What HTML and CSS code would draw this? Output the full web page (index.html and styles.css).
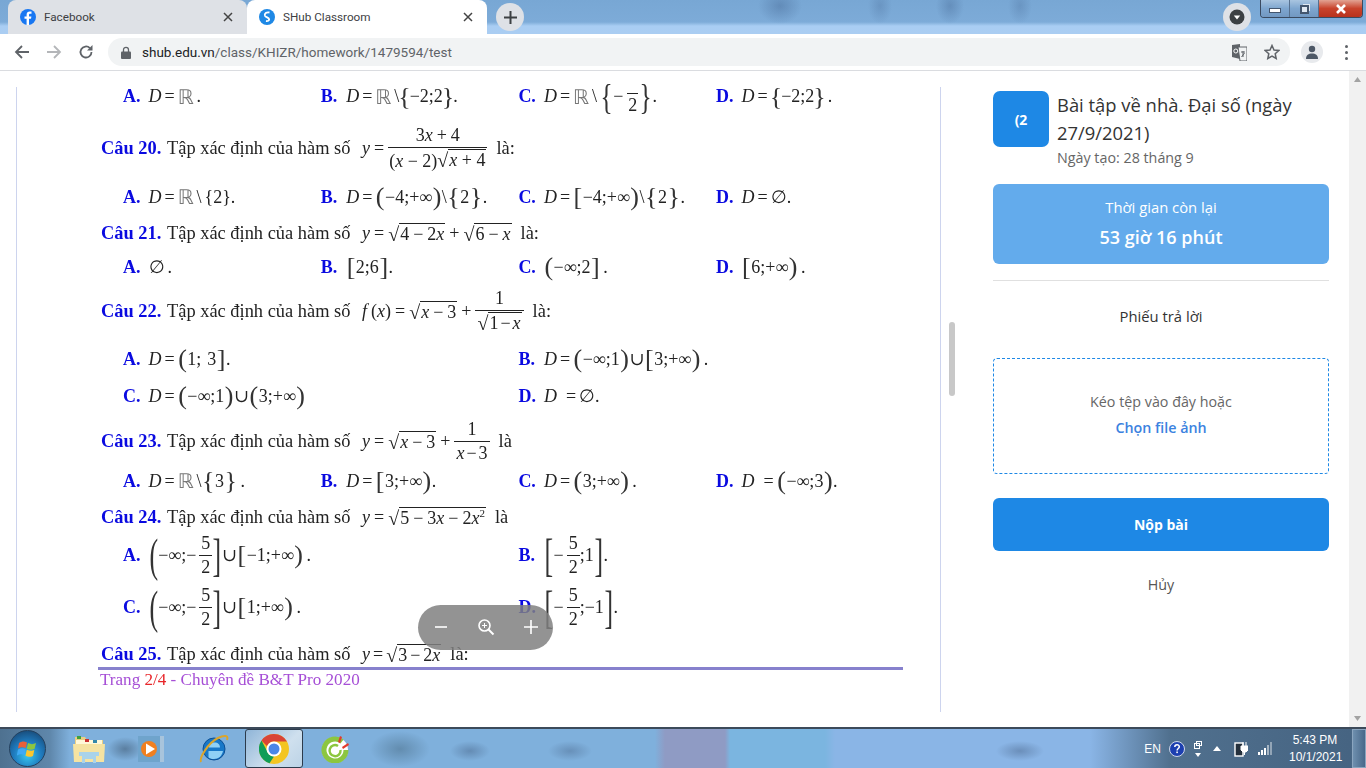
FILE: index.html
```html
<!DOCTYPE html>
<html lang="vi">
<head>
  <meta charset="UTF-8">
  <title>SHub Classroom</title>
  <link rel="stylesheet" href="styles.css">
</head>
<body>
  <!-- Browser frame -->
  <div class="tabstrip">
    <div class="tab tab-off">
      <svg class="favicon" viewBox="0 0 16 16"><circle cx="8" cy="8" r="8" fill="#1877f2"/><path d="M9 16V9.8h2l.4-2.4H9V6c0-.8.3-1.2 1.3-1.2h1.2V2.6C11.200 2.600 10.500 2.500 9.800 2.500 7.900 2.500 6.600 3.700 6.600 5.700v1.700H4.500v2.400h2.100V16z" fill="#fff"/></svg>
      <span class="tab-label">Facebook</span>
      <svg class="tab-x" viewBox="0 0 10 10"><path d="M1 1l8 8M9 1l-8 8" stroke="#444" stroke-width="1.500"/></svg>
    </div>
    <div class="tab tab-on">
      <svg class="favicon" viewBox="0 0 16 16"><circle cx="8" cy="8" r="8" fill="#1e88e5"/><path d="M10.500 3.500C7.500 2.800 5 4.500 6 6.800c.8 1.600 4 1.800 4.200 3.500.1 1.300-1.500 2-3.200 1.700" fill="none" stroke="#fff" stroke-width="1.800"/></svg>
      <span class="tab-label">SHub Classroom</span>
      <svg class="tab-x" viewBox="0 0 10 10"><path d="M1 1l8 8M9 1l-8 8" stroke="#444" stroke-width="1.500"/></svg>
    </div>
    <div class="round-btn new-tab">
      <svg width="13" height="13" viewBox="0 0 13 13"><path d="M6.500 0v13M0 6.500h13" stroke="#3c4043" stroke-width="2"/></svg>
    </div>
    <div class="round-btn ext-btn">
      <svg width="16" height="16" viewBox="0 0 16 16"><circle cx="8" cy="8" r="7.500" fill="#3c4043"/><path d="M4.800 6.500h6.400L8 10.500z" fill="#fff"/></svg>
    </div>
    <div class="win-controls">
      <div class="win-btn win-min"><span class="min-bar"></span></div>
      <div class="win-btn win-max"><span class="max-box"></span></div>
      <div class="win-btn win-close">
        <svg width="12" height="10" viewBox="0 0 12 10"><path d="M2 1l8 8M10 1l-8 8" stroke="#fff" stroke-width="2.600"/></svg>
      </div>
    </div>
  </div>

  <div class="toolbar">
    <div class="nav-btn">
      <svg width="16" height="16" viewBox="0 0 16 16"><path d="M15 8H2M8 2L2 8l6 6" fill="none" stroke="#5f6368" stroke-width="1.800"/></svg>
    </div>
    <div class="nav-btn">
      <svg width="16" height="16" viewBox="0 0 16 16"><path d="M1 8h13M8 2l6 6-6 6" fill="none" stroke="#b4b6b9" stroke-width="1.800"/></svg>
    </div>
    <div class="nav-btn">
      <svg width="16" height="16" viewBox="0 0 16 16"><path d="M13.500 8a5.500 5.500 0 1 1-1.600-3.900" fill="none" stroke="#5f6368" stroke-width="1.800"/><path d="M14.500 1v5.500H9z" fill="#5f6368"/></svg>
    </div>
    <div class="omnibox">
      <svg class="lock" width="10" height="13" viewBox="0 0 10 13"><path d="M2.500 6V3.800a2.500 2.500 0 0 1 5 0V6" fill="none" stroke="#5f6368" stroke-width="1.300"/><rect y="5.500" width="10" height="7.500" rx="1" fill="#5f6368"/></svg>
      <span class="url"><span class="url-host">shub.edu.vn</span>/class/KHIZR/homework/1479594/test</span>
      <svg class="translate" width="15" height="17" viewBox="0 0 15 17"><path d="M0 1l8-1 0 15-8-2z" fill="#5f6368"/><path d="M6 3h9v14H8z" fill="#f1f3f4" stroke="#5f6368"/><circle cx="3.800" cy="7" r="2" fill="none" stroke="#fff"/><path d="M9 8h4M11 7v6M9.500 13l3-4" stroke="#5f6368"/></svg>
      <svg class="star" width="16" height="16" viewBox="0 0 16 16"><path d="M8 1.500l2 4.500 4.800.5-3.600 3.200 1 4.800L8 12.100l-4.200 2.400 1-4.800L1.200 6.500 6 6z" fill="none" stroke="#5f6368" stroke-width="1.500"/></svg>
    </div>
    <div class="avatar">
      <svg width="12" height="14" viewBox="0 0 12 14"><circle cx="6" cy="4" r="3.200" fill="#4d5866"/><path d="M0 14c0-4 2.500-5.500 6-5.500s6 1.500 6 5.500z" fill="#4d5866"/></svg>
    </div>
    <div class="menu-dots"><span></span><span></span><span></span></div>
  </div>

  <!-- Page -->
  <div class="page">
    <div class="sheet-wrap">
      <div class="sheet">
        <div class="row h37 first">
          <div class="opt"><b class="key">A.</b><span class="math"><i>D</i> = <span class="bb">ℝ</span> .</span></div>
          <div class="opt"><b class="key">B.</b><span class="math"><i>D</i> = <span class="bb">ℝ</span> \<span class="d d-tight">{</span>−2;2<span class="d d-tight">}</span>.</span></div>
          <div class="opt"><b class="key">C.</b><span class="math"><i>D</i> = <span class="bb">ℝ</span> \ <span class="d d-mid">{</span>− <span class="frac"><span class="num num-cut"></span><span class="den">2</span></span><span class="d d-mid">}</span>.</span></div>
          <div class="opt"><b class="key">D.</b><span class="math"><i>D</i> = <span class="d d-tight">{</span>−2;2<span class="d d-tight">}</span> .</span></div>
        </div>

        <div class="q h66"><b class="qno">Câu 20.</b> Tập xác định của hàm số <span class="math qm"><i>y</i> = <span class="frac"><span class="num">3<i>x</i> + 4</span><span class="den den-wide">(<i>x</i> − 2)<span class="sqrt"><span class="rad-sign">√</span><span class="rad"><i>x</i> + 4</span></span></span></span></span> <span class="la">là:</span></div>

        <div class="row h32">
          <div class="opt"><b class="key">A.</b><span class="math"><i>D</i> = <span class="bb">ℝ</span> \ {2}.</span></div>
          <div class="opt"><b class="key">B.</b><span class="math"><i>D</i> = <span class="d">(</span>−4;+∞<span class="d">)</span>\<span class="d">{</span>2<span class="d">}</span>.</span></div>
          <div class="opt"><b class="key">C.</b><span class="math"><i>D</i> = <span class="d">[</span>−4;+∞<span class="d">)</span>\<span class="d">{</span>2<span class="d">}</span>.</span></div>
          <div class="opt"><b class="key">D.</b><span class="math"><i>D</i> = ∅.</span></div>
        </div>

        <div class="q h40"><b class="qno">Câu 21.</b> Tập xác định của hàm số <span class="math qm"><i>y</i> = <span class="sqrt"><span class="rad-sign">√</span><span class="rad">4 − 2<i>x</i></span></span> + <span class="sqrt"><span class="rad-sign">√</span><span class="rad">6 − <i>x</i></span></span></span> <span class="la">là:</span></div>

        <div class="row h28">
          <div class="opt"><b class="key">A.</b><span class="math">∅ .</span></div>
          <div class="opt"><b class="key">B.</b><span class="math"><span class="d">[</span>2;6<span class="d">]</span>.</span></div>
          <div class="opt"><b class="key">C.</b><span class="math"><span class="d">(</span>−∞;2<span class="d">]</span> .</span></div>
          <div class="opt"><b class="key">D.</b><span class="math"><span class="d">[</span>6;+∞<span class="d">)</span> .</span></div>
        </div>

        <div class="q h60"><b class="qno">Câu 22.</b> Tập xác định của hàm số <span class="math qm"><i>f</i> (<i>x</i>) = <span class="sqrt"><span class="rad-sign">√</span><span class="rad"><i>x</i> − 3</span></span> + <span class="frac"><span class="num">1</span><span class="den den-tight"><span class="sqrt"><span class="rad-sign">√</span><span class="rad">1 − <i>x</i></span></span></span></span></span> <span class="la">là:</span></div>

        <div class="row row-2 h36">
          <div class="opt"><b class="key">A.</b><span class="math"><i>D</i> = <span class="d">(</span>1;&nbsp; 3<span class="d">]</span>.</span></div>
          <div class="opt"><b class="key">B.</b><span class="math"><i>D</i> = <span class="d">(</span>−∞;1<span class="d">)</span>∪<span class="d">[</span>3;+∞<span class="d">)</span> .</span></div>
        </div>
        <div class="row row-2 h38">
          <div class="opt"><b class="key">C.</b><span class="math"><i>D</i> = <span class="d">(</span>−∞;1<span class="d">)</span>∪<span class="d">(</span>3;+∞<span class="d">)</span></span></div>
          <div class="opt"><b class="key">D.</b><span class="math"><i>D</i>&nbsp;&nbsp; = ∅.</span></div>
        </div>

        <div class="q h52"><b class="qno">Câu 23.</b> Tập xác định của hàm số <span class="math qm"><i>y</i> = <span class="sqrt"><span class="rad-sign">√</span><span class="rad"><i>x</i> − 3</span></span> + <span class="frac"><span class="num">1</span><span class="den den-tight"><i>x</i> − 3</span></span></span> <span class="la">là</span></div>

        <div class="row h28">
          <div class="opt"><b class="key">A.</b><span class="math"><i>D</i> = <span class="bb">ℝ</span> \<span class="d">{</span>3<span class="d">}</span> .</span></div>
          <div class="opt"><b class="key">B.</b><span class="math"><i>D</i> = <span class="d">[</span>3;+∞<span class="d">)</span>.</span></div>
          <div class="opt"><b class="key">C.</b><span class="math"><i>D</i> = <span class="d">(</span>3;+∞<span class="d">)</span> .</span></div>
          <div class="opt"><b class="key">D.</b><span class="math"><i>D</i>&nbsp;&nbsp; = <span class="d">(</span>−∞;3<span class="d">)</span>.</span></div>
        </div>

        <div class="q h44"><b class="qno">Câu 24.</b> Tập xác định của hàm số <span class="math qm"><i>y</i> = <span class="sqrt"><span class="rad-sign">√</span><span class="rad">5 − 3<i>x</i> − 2<i>x</i><sup>2</sup></span></span></span> <span class="la">là</span></div>

        <div class="row row-2 h32">
          <div class="opt"><b class="key">A.</b><span class="math"><span class="d d-tall">(</span>−∞;− <span class="frac"><span class="num">5</span><span class="den">2</span></span><span class="d d-tall">]</span>∪<span class="d">[</span>−1;+∞<span class="d">)</span> .</span></div>
          <div class="opt"><b class="key">B.</b><span class="math"><span class="d d-tall">[</span>− <span class="frac"><span class="num">5</span><span class="den">2</span></span>;1<span class="d d-tall">]</span>.</span></div>
        </div>
        <div class="row row-2 h72">
          <div class="opt"><b class="key">C.</b><span class="math"><span class="d d-tall">(</span>−∞;− <span class="frac"><span class="num">5</span><span class="den">2</span></span><span class="d d-tall">]</span>∪<span class="d">[</span>1;+∞<span class="d">)</span> .</span></div>
          <div class="opt"><b class="key">D.</b><span class="math"><span class="d d-tall">[</span>− <span class="frac"><span class="num">5</span><span class="den">2</span></span>;−1<span class="d d-tall">]</span>.</span></div>
        </div>

        <div class="q h22"><b class="qno">Câu 25.</b> Tập xác định của hàm số <span class="math qm qm-tight"><i>y</i> = <span class="sqrt"><span class="rad-sign">√</span><span class="rad">3 − 2<i>x</i></span></span></span> <span class="la">là:</span></div>

        <div class="sheet-rule"></div>
        <div class="sheet-foot">Trang <span class="foot-no">2/4</span> - Chuyên đề B&amp;T Pro 2020</div>
      </div>

      <!-- Zoom controls over the sheet -->
      <div class="zoom-pill">
        <svg width="14" height="14" viewBox="0 0 14 14"><path d="M1 7h12" stroke="#fff" stroke-width="1.600"/></svg>
        <svg width="18" height="18" viewBox="0 0 18 18"><circle cx="7.500" cy="7.500" r="5.500" fill="none" stroke="#fff" stroke-width="1.600"/><path d="M11.500 11.500l5 5" stroke="#fff" stroke-width="2"/><path d="M5 7.500h5M7.500 5v5" stroke="#fff"/></svg>
        <svg width="14" height="14" viewBox="0 0 14 14"><path d="M0 7h14M7 0v14" stroke="#fff" stroke-width="1.600"/></svg>
      </div>
    </div>

    <div class="sheet-scroll"><div class="sheet-thumb"></div></div>

    <aside class="panel">
      <div class="hw-head">
        <div class="hw-badge">(2</div>
        <div class="hw-info">
          <div class="hw-title">Bài tập về nhà. Đại số (ngày 27/9/2021)</div>
          <div class="hw-date">Ngày tạo: 28 tháng 9</div>
        </div>
      </div>
      <div class="timer">
        <div class="timer-label">Thời gian còn lại</div>
        <div class="timer-value">53 giờ 16 phút</div>
      </div>
      <div class="divider"></div>
      <div class="answer-title">Phiếu trả lời</div>
      <div class="dropzone">
        <div class="drop-text">Kéo tệp vào đây hoặc</div>
        <div class="drop-link">Chọn file ảnh</div>
      </div>
      <div class="submit">Nộp bài</div>
      <div class="cancel">Hủy</div>
    </aside>

    <div class="page-scroll">
      <svg width="7" height="5" viewBox="0 0 7 5"><path d="M3.500 0L7 5H0z" fill="#a3a3a3"/></svg>
      <svg width="7" height="5" viewBox="0 0 7 5"><path d="M3.500 5L7 0H0z" fill="#a3a3a3"/></svg>
    </div>
  </div>

  <!-- Windows taskbar -->
  <div class="taskbar">
    <div class="orb">
      <svg width="22" height="22" viewBox="0 0 22 22"><path d="M2 5c3-2 5-2 8-.5L8.800 10C6 8.800 4 8.800 1 10.500z" fill="#e8603a"/><path d="M11 5c3 1.500 5 1.500 8 0l-1.500 6c-3 1.200-5 1-7.700-.2z" fill="#8cc63f"/><path d="M1 11.500c3-1.500 5-1.500 7.700-.3L7.500 17c-3-1.300-5-1-7.700.5z" fill="#3fa9f5"/><path d="M9.800 11.800c3 1.200 5 1.400 7.500.2L16 18c-3 1.300-5 1-7.500-.3z" fill="#fdc62d"/></svg>
    </div>
    <div class="tb-item tb-folder">
      <svg width="32" height="32" viewBox="0 0 32 32"><path d="M2 4h10l2 3h16v20H2z" fill="#e8cf84"/><rect x="3" y="7" width="26" height="5" fill="#fff8d8"/><path d="M0 11h32l-1 18H1z" fill="#f5e3a2"/><rect x="4" y="3" width="4" height="3" fill="#3fa03f"/><rect x="12" y="6" width="4" height="3" fill="#c33"/><rect x="20" y="7" width="4" height="3" fill="#38a"/><path d="M6 19h20v4h-3v7h-3v-4h-8v4H9v-7H6z" fill="#a9d3ea"/></svg>
    </div>
    <div class="tb-item tb-wmp">
      <svg width="26" height="28" viewBox="0 0 26 28"><rect x="3" y="1" width="23" height="26" fill="#a8c4dc"/><rect x="0" y="1" width="22" height="26" fill="#6fa4cc"/><circle cx="11" cy="14" r="8" fill="#f08020"/><path d="M8 8.500L17 14l-9 5.500z" fill="#fff"/></svg>
    </div>
    <div class="tb-item tb-ie">
      <svg width="32" height="32" viewBox="0 0 32 32"><circle cx="16" cy="16" r="11" fill="#1878c8"/><path d="M11 14.500h11c0-3-2-5-5.500-5S11 11.500 11 14.500zM10.500 18h14.500c-1 5-4.500 8-9 8-2 0-4-.5-5.500-1.500" fill="#8fd0f5"/><circle cx="16" cy="16" r="11" fill="none" stroke="#0d4f94"/><path d="M3 29C1 25 10 10 20 5c6-3 11-3 9 2" fill="none" stroke="#dba52c" stroke-width="2"/></svg>
    </div>
    <div class="tb-item tb-chrome">
      <svg width="30" height="30" viewBox="0 0 30 30"><circle cx="15" cy="15" r="15" fill="#f3c522"/><path d="M15 0a15 15 0 0 1 13 7.500H15a7.500 7.500 0 0 0-7 4.800L2.500 6.500A15 15 0 0 1 15 0z" fill="#d94437"/><path d="M2.500 6.500L8.800 18.500A7.500 7.500 0 0 0 15 22.500L10.500 29.300A15 15 0 0 1 2.500 6.500z" fill="#0f9d58"/><circle cx="15" cy="15" r="7.500" fill="#fff"/><circle cx="15" cy="15" r="5.500" fill="#4a86e8"/></svg>
    </div>
    <div class="tb-item tb-coccoc">
      <svg width="28" height="28" viewBox="0 0 28 28"><circle cx="14" cy="15" r="13" fill="#fff"/><path d="M21 6.500A11 11 0 1 0 25 15" fill="none" stroke="#8cc63f" stroke-width="5"/><path d="M17 11a5.500 5.500 0 1 0 2.500 4" fill="none" stroke="#8cc63f" stroke-width="2.500"/><path d="M17 7l2-6 2 1-2 6zM21 12l6-4 1 2-6 4z" fill="#e23b2e"/></svg>
    </div>
    <div class="tray">
      <span class="tray-lang">EN</span>
      <svg class="tray-help" width="16" height="16" viewBox="0 0 16 16"><circle cx="8" cy="8" r="7.500" fill="#1c3fb0" stroke="#cfd8ea"/><path d="M5.800 6c0-3 4.500-3 4.500-.2 0 1.700-2.200 1.700-2.200 3.700" fill="none" stroke="#fff" stroke-width="1.500"/><rect x="7.300" y="10.500" width="1.600" height="1.600" fill="#fff"/></svg>
      <div class="tray-lang-bar">
        <svg width="8" height="8" viewBox="0 0 8 8"><rect x=".5" y="2.500" width="5" height="5" fill="none" stroke="#fff"/><rect x="2.500" y=".5" width="5" height="4" fill="none" stroke="#fff"/></svg>
        <svg width="6" height="4" viewBox="0 0 6 4"><path d="M0 0h6L3 4z" fill="#fff"/></svg>
      </div>
      <svg class="tray-up" width="8" height="5" viewBox="0 0 8 5"><path d="M4 0l4 5H0z" fill="#fff"/></svg>
      <svg class="tray-power" width="14" height="16" viewBox="0 0 14 16"><rect x="1" y="2" width="8" height="13" fill="#24303c" stroke="#fff" stroke-width="1.400"/><path d="M7 5h7v4l-2 2H9L7 9zM9 1v4M12 1v4M10.500 11v3" fill="#fff" stroke="#fff"/></svg>
      <svg class="tray-signal" width="15" height="13" viewBox="0 0 15 13"><rect y="10" width="2" height="3" fill="#fff"/><rect x="3" y="8" width="2" height="5" fill="#fff"/><rect x="6" y="6" width="2" height="7" fill="#fff"/><rect x="9" y="3" width="2" height="10" fill="#fff" opacity=".5"/><rect x="12" y="0" width="2" height="13" fill="#fff" opacity=".4"/></svg>
      <div class="clock"><div>5:43 PM</div><div>10/1/2021</div></div>
      <div class="show-desktop"></div>
    </div>
  </div>
</body>
</html>
```
FILE: styles.css
```css
html, body {
  margin: 0;
  height: 768px;
  overflow: hidden;
  background: #fff;
}
body {
  display: flex;
  flex-direction: column;
  font-family: 'Open Sans', sans-serif;
  color: #333;
}

/* Tab strip with the blurred desktop behind it */
.tabstrip {
  height: 34px;
  flex: none;
  display: flex;
  align-items: flex-start;
  padding-left: 8px;
  box-sizing: border-box;
  font-family: Roboto, sans-serif;
  background:
    radial-gradient(ellipse 22px 18px at 780px 6px, rgba(70,105,150,.45), transparent),
    radial-gradient(ellipse 12px 18px at 880px 6px, rgba(70,105,150,.3), transparent),
    radial-gradient(ellipse 14px 18px at 950px 6px, rgba(70,105,150,.4), transparent),
    radial-gradient(ellipse 12px 18px at 1020px 6px, rgba(70,105,150,.3), transparent),
    linear-gradient(to bottom, #78a7d4 0, #7dabd8 22px, #a9cdf3 26px, #aacdf2 100%);
}
.tab {
  width: 239px;
  height: 34px;
  box-sizing: border-box;
  display: flex;
  align-items: center;
  padding: 0 14px 0 12px;
  border-radius: 8px 8px 0 0;
  font-size: 11.7px;
  color: #3c4043;
}
.tab-off { background: #dee1e6; }
.tab-on { background: #fff; width: 240px; }
.favicon { width: 16px; height: 16px; flex: none; }
.tab-label { margin-left: 8px; flex: 1; }
.tab-x { width: 10px; height: 10px; flex: none; }
.round-btn {
  width: 28px;
  height: 28px;
  margin-top: 3px;
  border-radius: 50%;
  background: #dee1e6;
  display: flex;
  align-items: center;
  justify-content: center;
  flex: none;
}
.new-tab { margin-left: 9px; }
.ext-btn { margin-left: auto; }
.win-controls {
  display: flex;
  width: 103px;
  height: 18px;
  margin: 0 3px 0 9px;
  box-sizing: border-box;
  border: 1px solid #3a4a60;
  border-top: 0;
  border-radius: 0 0 4px 4px;
  overflow: hidden;
}
.win-btn {
  display: flex;
  align-items: center;
  justify-content: center;
  border-right: 1px solid #56708e;
  background: linear-gradient(to bottom, #a9c5e0, #7ea6cf 50%, #7298c2);
}
.win-min, .win-max { width: 28px; }
.win-close {
  flex: 1;
  border-right: 0;
  background: linear-gradient(to bottom, #e2a393, #c8432c 50%, #b8321d);
}
.min-bar {
  width: 12px;
  height: 5px;
  margin-top: 4px;
  background: #fff;
  border: 1px solid #44566e;
  box-sizing: border-box;
}
.max-box {
  width: 9px;
  height: 9px;
  margin-top: 2px;
  background: #dfe8f2;
  border: 2px solid #44566e;
  box-shadow: 2px -2px 0 -1px #dfe8f2;
  box-sizing: border-box;
}

/* Toolbar */
.toolbar {
  height: 37px;
  flex: none;
  box-sizing: border-box;
  display: flex;
  align-items: center;
  padding-left: 6px;
  background: #fff;
  border-bottom: 1px solid #dadce0;
  font-family: Roboto, sans-serif;
}
.nav-btn {
  width: 32px;
  display: flex;
  justify-content: center;
  flex: none;
}
.omnibox {
  width: 1182px;
  height: 28px;
  margin-left: 6px;
  flex: none;
  display: flex;
  align-items: center;
  padding-left: 13px;
  box-sizing: border-box;
  border-radius: 14px;
  background: #f1f3f4;
}
.url {
  margin-left: 11px;
  font-size: 13.5px;
  color: #5f6368;
  flex: 1;
}
.url-host { color: #202124; }
.translate { margin-right: 17px; }
.star { margin-right: 10px; }
.avatar {
  width: 22px;
  height: 22px;
  margin-left: 11px;
  border-radius: 50%;
  background: #e8eaed;
  display: flex;
  align-items: center;
  justify-content: center;
  flex: none;
}
.menu-dots {
  margin-left: 22px;
  display: flex;
  flex-direction: column;
  gap: 3px;
}
.menu-dots span {
  width: 3px;
  height: 3px;
  border-radius: 50%;
  background: #5f6368;
}

/* Page area */
.page {
  flex: 1;
  min-height: 0;
  display: flex;
  padding-left: 16px;
  background: #fff;
  position: relative;
}
.sheet-wrap { position: relative; flex: none; }
.sheet {
  display: flow-root;
  width: 925px;
  height: 625px;
  margin-top: 16px;
  box-sizing: border-box;
  border-left: 1px solid #cdd4ee;
  border-right: 1px solid #cdd4ee;
  font-family: 'Liberation Serif', 'DejaVu Serif', serif;
  font-size: 18px;
  color: #222;
  filter: blur(.35px);
}
.first { margin-top: -9px; }
.h22 { height: 22px; }
.h28 { height: 28px; }
.h32 { height: 32px; }
.h36 { height: 36px; }
.h37 { height: 37px; }
.h38 { height: 38px; }
.h40 { height: 40px; }
.h44 { height: 44px; }
.h52 { height: 52px; }
.h60 { height: 60px; }
.h66 { height: 66px; }
.h72 { height: 72px; }

.row {
  display: grid;
  grid-template-columns: repeat(4, 197.7px);
  grid-template-rows: 100%;
  align-items: center;
  padding-left: 106px;
}
.row-2 { grid-template-columns: repeat(2, 395.4px); }
.opt { display: flex; align-items: center; }
.key {
  width: 25.5px;
  flex: none;
  color: #0a0ae0;
}
.q {
  display: flex;
  align-items: center;
  padding-left: 84px;
  white-space: pre;
  font-size: 18.4px;
}
.qno { color: #0a0ae0; margin-right: 1.5px; }
.la { margin-left: 9px; }
.math {
  display: inline-flex;
  align-items: center;
  white-space: pre;
  word-spacing: -1.5px;
}
.qm { margin-left: 7px; font-size: 18px; word-spacing: -.5px; }
.qm-tight { word-spacing: -1.5px; }
.bb { font-family: 'DejaVu Sans', sans-serif; color: #777; font-size: 20px; line-height: 1; }
.d {
  font-size: 26px;
  line-height: 1;
  font-weight: 400;
  color: #333;
  margin: 0 .5px;
}
.d-tight { margin: 0 -1px; }
.d-mid { font-size: 36px; transform: scaleX(.7); margin: 0 -2px; }
.d-tall { font-size: 47px; transform: scaleX(.55); margin: 0 -3px; }
.frac {
  display: inline-flex;
  flex-direction: column;
  align-items: stretch;
  text-align: center;
  line-height: 20px;
}
.num { border-bottom: 1px solid #222; padding: 0 2px 2px; }
.num-cut { height: 14px; padding: 0; width: 11px; align-self: center; }
.den { padding: 1px 2px 0; }
.den-wide { word-spacing: 0; padding: 1px 1px 0; }
.den-tight { word-spacing: -2.5px; }
.sqrt { display: inline-flex; align-items: flex-end; line-height: 20px; }
.rad-sign { font-size: 20px; line-height: 20px; }
.rad { border-top: 1px solid #222; padding: 0 1px; }
sup { font-size: 11px; line-height: 0; }
.sheet-rule {
  height: 3px;
  margin: 2px 37px 0 81px;
  background: #8781cd;
}
.sheet-foot {
  padding-left: 83px;
  line-height: 20px;
  font-size: 17.1px;
  color: #a64fd6;
}
.foot-no { color: #e8262a; }

.zoom-pill {
  position: absolute;
  left: 402px;
  top: 534px;
  width: 135px;
  height: 45px;
  box-sizing: border-box;
  padding: 0 15px 1px 16px;
  display: flex;
  align-items: center;
  justify-content: space-between;
  border-radius: 23px;
  background: rgba(128,128,128,.85);
}

.sheet-scroll {
  width: 6px;
  margin-left: 8px;
  flex: none;
}
.sheet-thumb {
  margin-top: 251px;
  height: 74px;
  border-radius: 3px;
  background: #c8c8c8;
}

/* Right panel */
.panel {
  width: 336px;
  margin-left: 38px;
  flex: none;
  padding-top: 20px;
  font-size: 14.3px;
}
.hw-head { display: flex; gap: 8px; }
.hw-badge {
  width: 56px;
  height: 56px;
  flex: none;
  display: flex;
  align-items: center;
  justify-content: center;
  border-radius: 7px;
  background: #1e88e5;
  color: #fff;
  font-weight: 700;
  font-size: 14px;
}
.hw-title {
  font-size: 18.4px;
  line-height: 28px;
  color: #333;
}
.hw-date {
  line-height: 20px;
  margin-top: 1px;
  color: #666;
}
.timer {
  height: 80px;
  margin-top: 16px;
  border-radius: 6px;
  background: #63abec;
  color: #fff;
  text-align: center;
  box-sizing: border-box;
  padding-top: 13px;
}
.timer-label { line-height: 20px; font-size: 14.8px; }
.timer-value {
  margin-top: 6px;
  font-size: 18px;
  line-height: 28px;
  font-weight: 600;
}
.divider {
  height: 1px;
  margin-top: 16px;
  background: #e0e0e0;
}
.answer-title {
  margin-top: 25px;
  line-height: 20px;
  text-align: center;
  font-weight: 500;
  font-size: 14.8px;
}
.dropzone {
  height: 116px;
  margin-top: 32px;
  box-sizing: border-box;
  border: 1px dashed #1e88e5;
  border-radius: 4px;
  text-align: center;
  padding-top: 33px;
  line-height: 20px;
}
.drop-text { color: #666; }
.drop-link {
  margin-top: 6px;
  color: #3b82e0;
  font-weight: 600;
}
.submit {
  height: 53px;
  margin-top: 24px;
  border-radius: 6px;
  background: #1e88e5;
  color: #fff;
  font-weight: 700;
  font-size: 14px;
  display: flex;
  align-items: center;
  justify-content: center;
}
.cancel {
  margin-top: 24px;
  line-height: 20px;
  text-align: center;
  color: #555;
}

.page-scroll {
  width: 17px;
  margin-left: auto;
  background: #f1f1f1;
  display: flex;
  flex-direction: column;
  align-items: center;
  justify-content: space-between;
  padding: 6px 0;
  box-sizing: border-box;
}

/* Windows taskbar */
.taskbar {
  height: 41px;
  flex: none;
  box-sizing: border-box;
  border-top: 2px solid #3c4a5a;
  display: flex;
  align-items: center;
  background:
    radial-gradient(ellipse 18px 12px at 125px 20px, rgba(60,85,110,.55), transparent),
    radial-gradient(ellipse 30px 18px at 400px 20px, rgba(70,105,130,.5), transparent),
    radial-gradient(ellipse 20px 10px at 470px 22px, rgba(60,85,120,.4), transparent),
    radial-gradient(ellipse 22px 10px at 570px 22px, rgba(60,85,120,.35), transparent),
    radial-gradient(ellipse 24px 10px at 1020px 22px, rgba(60,85,120,.4), transparent),
    linear-gradient(to right, #4e7190 0, #5f87ab 50px, #7fb0dc 70px, #7fb0dc 655px, #8f9bc4 665px, #8f9bc4 725px, #7bb5e0 730px, #7bb5e0 825px, #8ab5e6 835px, #8ab5e6 1090px, #50708e 1170px, #466482 1350px, #5d7f9e 1366px);
}
.orb {
  width: 37px;
  height: 37px;
  margin-left: 9px;
  flex: none;
  border-radius: 50%;
  display: flex;
  align-items: center;
  justify-content: center;
  background: radial-gradient(circle at 50% 70%, #39c8ef 0, #1f7cc0 45%, #16395f 100%);
  border: 1px solid #23405e;
  box-sizing: border-box;
}
.tb-item { display: flex; flex: none; }
.tb-folder { margin-left: 27px; }
.tb-wmp { margin-left: 33px; }
.tb-ie { margin-left: 34px; }
.tb-chrome {
  margin-left: 15px;
  width: 58px;
  height: 39px;
  box-sizing: border-box;
  align-items: center;
  justify-content: center;
  border: 1px solid #2c3b4c;
  border-radius: 3px;
  background: linear-gradient(135deg, #8fb5d8, #cfe0ee 60%, #bcd3e6);
}
.tb-coccoc { margin-left: 18px; }
.tray {
  margin-left: auto;
  display: flex;
  align-items: center;
  height: 100%;
  color: #fff;
  font-family: 'Liberation Sans', sans-serif;
  font-size: 12px;
}
.tray-lang { margin-right: 8px; }
.tray-lang-bar {
  display: flex;
  flex-direction: column;
  align-items: center;
  gap: 4px;
  margin: 0 11px 0 9px;
}
.tray-up { margin-right: 13px; }
.tray-power { margin-right: 10px; }
.tray-signal { margin-right: 16px; }
.clock {
  width: 52px;
  text-align: center;
  line-height: 17px;
}
.show-desktop {
  width: 14px;
  height: 100%;
  margin-left: 11px;
  box-sizing: border-box;
  border: 1px solid #8aa5bf;
  background: linear-gradient(to right, #6e8fae, #48688a);
}
```
